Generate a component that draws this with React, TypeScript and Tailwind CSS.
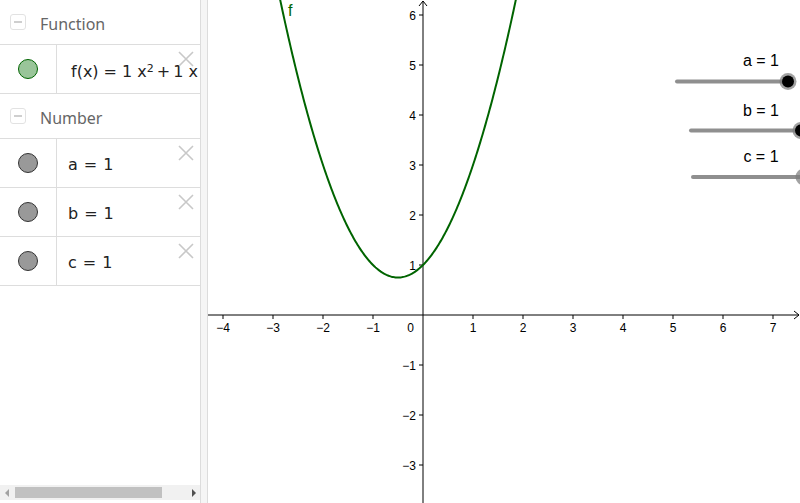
import React from "react";

const O = { x: 423, y: 315 };
const U = 50;
const px = (x: number) => O.x + x * U;
const py = (y: number) => O.y - y * U;

function parabola() {
  const pts: string[] = [];
  for (let x = -2.95; x <= 1.95; x += 0.02) {
    pts.push(`${px(x).toFixed(2)},${py(x * x + x + 1).toFixed(2)}`);
  }
  return "M" + pts.join(" L");
}

function Cross() {
  return (
    <svg width="18" height="18" viewBox="0 0 18 18" className="absolute right-[5px] top-[5px]">
      <path d="M2 2 L16 16 M16 2 L2 16" stroke="#c8c8c8" strokeWidth="1.6" />
    </svg>
  );
}

function GroupHeader({ label }: { label: string }) {
  return (
    <div className="flex h-[45px] items-center border-b border-[#dddddd] pl-[10px]">
      <div className="grid h-[16px] w-[16px] place-items-center rounded-[3px] border border-[#e2e2e2]">
        <div className="h-[1.5px] w-[8px] bg-[#cfcfcf]" />
      </div>
      <span className="ml-[14px] pt-[3px] text-[16px] text-[#666666]">{label}</span>
    </div>
  );
}

function Row({ fill, stroke, pt = "pt-[3px]", children }: { fill: string; stroke: string; pt?: string; children: React.ReactNode }) {
  return (
    <div className="relative flex h-[49px] border-b border-[#dddddd]">
      <div className="flex w-[57px] shrink-0 items-center justify-center border-r border-[#dddddd]">
        <div className="h-[20px] w-[20px] rounded-full border" style={{ background: fill, borderColor: stroke }} />
      </div>
      <div
        className={`flex items-center whitespace-nowrap pl-[11px] text-[16px] text-[#222222] ${pt}`}
        style={{ fontFamily: '"DejaVu Sans", sans-serif' }}
      >
        {children}
      </div>
      <Cross />
    </div>
  );
}

function Graph() {
  const xt = [-4, -3, -2, -1, 1, 2, 3, 4, 5, 6, 7];
  const yt = [-3, -2, -1, 1, 2, 3, 4, 5, 6];
  const lbl = (n: number) => (n < 0 ? "\u2212" + Math.abs(n) : String(n));
  return (
    <svg width="592" height="503" viewBox="208 0 592 503" className="block" style={{ fontFamily: '"Liberation Sans", Arial, sans-serif' }}>
      <line x1="208" y1={O.y} x2="799" y2={O.y} stroke="#000" strokeWidth="1" />
      <path d="M794 311 L799 315 L794 319" fill="none" stroke="#000" strokeWidth="1" />
      <line x1={O.x} y1="1" x2={O.x} y2="503" stroke="#000" strokeWidth="1" />
      <path d="M419 6 L423 1 L427 6" fill="none" stroke="#000" strokeWidth="1" />
      {xt.map((t) => (
        <g key={"x" + t}>
          <line x1={px(t)} y1={O.y} x2={px(t)} y2={O.y + 4} stroke="#000" />
          <text x={px(t)} y="332" fontSize="12" textAnchor="middle" fill="#000">{lbl(t)}</text>
        </g>
      ))}
      <text x="414" y="332" fontSize="12" textAnchor="end" fill="#000">0</text>
      {yt.map((t) => (
        <g key={"y" + t}>
          <line x1={O.x - 4} y1={py(t)} x2={O.x} y2={py(t)} stroke="#000" />
          <text x="416" y={py(t) + 4.5} fontSize="12" textAnchor="end" fill="#000">{lbl(t)}</text>
        </g>
      ))}
      <path d={parabola()} fill="none" stroke="#006400" strokeWidth="2" />
      <text x="288" y="16" fontSize="16" fill="#006400">f</text>

      <text x="761" y="66" fontSize="16" textAnchor="middle" fill="#000">a = 1</text>
      <line x1="677" y1="81.5" x2="788" y2="81.5" stroke="#8f8f8f" strokeWidth="4" strokeLinecap="round" />
      <circle cx="788" cy="81.5" r="8.5" fill="#7a7a7a" opacity="0.7" />
      <circle cx="788" cy="81.5" r="6" fill="#000" />

      <text x="761" y="116" fontSize="16" textAnchor="middle" fill="#000">b = 1</text>
      <line x1="691" y1="130.5" x2="801" y2="130.5" stroke="#8f8f8f" strokeWidth="4" strokeLinecap="round" />
      <circle cx="801" cy="130.5" r="8.5" fill="#7a7a7a" opacity="0.7" />
      <circle cx="801" cy="130.5" r="6" fill="#000" />

      <text x="761" y="162" fontSize="16" textAnchor="middle" fill="#000">c = 1</text>
      <line x1="693" y1="177" x2="803" y2="177" stroke="#8f8f8f" strokeWidth="4" strokeLinecap="round" />
      <circle cx="804" cy="177" r="8.5" fill="#7a7a7a" opacity="0.7" />
    </svg>
  );
}

export default function App() {
  return (
    <div className="flex h-[503px] w-[800px] overflow-hidden bg-white" style={{ fontFamily: '"Noto Sans", "Open Sans", sans-serif' }}>
      <div className="flex w-[200px] shrink-0 flex-col overflow-hidden">
        <GroupHeader label="Function" />
        <Row fill="#99c599" stroke="#006400" pt="pt-[6px]">
          <span className="pl-[3px]">
            f(x)<span className="mx-[5px]">=</span>1 x<sup className="text-[11px]">2</sup>
            <span className="mx-[3px]">+</span>1 x
          </span>
        </Row>
        <GroupHeader label="Number" />
        <Row fill="#999999" stroke="#333333">
          <span>a<span className="mx-[6px]">=</span>1</span>
        </Row>
        <Row fill="#999999" stroke="#333333">
          <span>b<span className="mx-[6px]">=</span>1</span>
        </Row>
        <Row fill="#999999" stroke="#333333">
          <span>c<span className="mx-[6px]">=</span>1</span>
        </Row>
        <div className="flex-1" />
        <div className="flex h-[15px] items-center bg-[#f1f1f1]">
          <div className="ml-[5px] h-0 w-0 border-y-[4px] border-r-[4px] border-y-transparent border-r-[#a3a3a3]" />
          <div className="ml-[6px] h-[11px] w-[147px] bg-[#c1c1c1]" />
          <div className="flex-1" />
          <div className="mr-[4px] h-0 w-0 border-y-[4px] border-l-[4px] border-y-transparent border-l-[#505050]" />
        </div>
        <div className="h-[3px]" />
      </div>
      <div className="w-[8px] shrink-0 border-x border-[#dcdcdc] bg-[#f5f5f5]" />
      <div className="flex-1">
        <Graph />
      </div>
    </div>
  );
}
